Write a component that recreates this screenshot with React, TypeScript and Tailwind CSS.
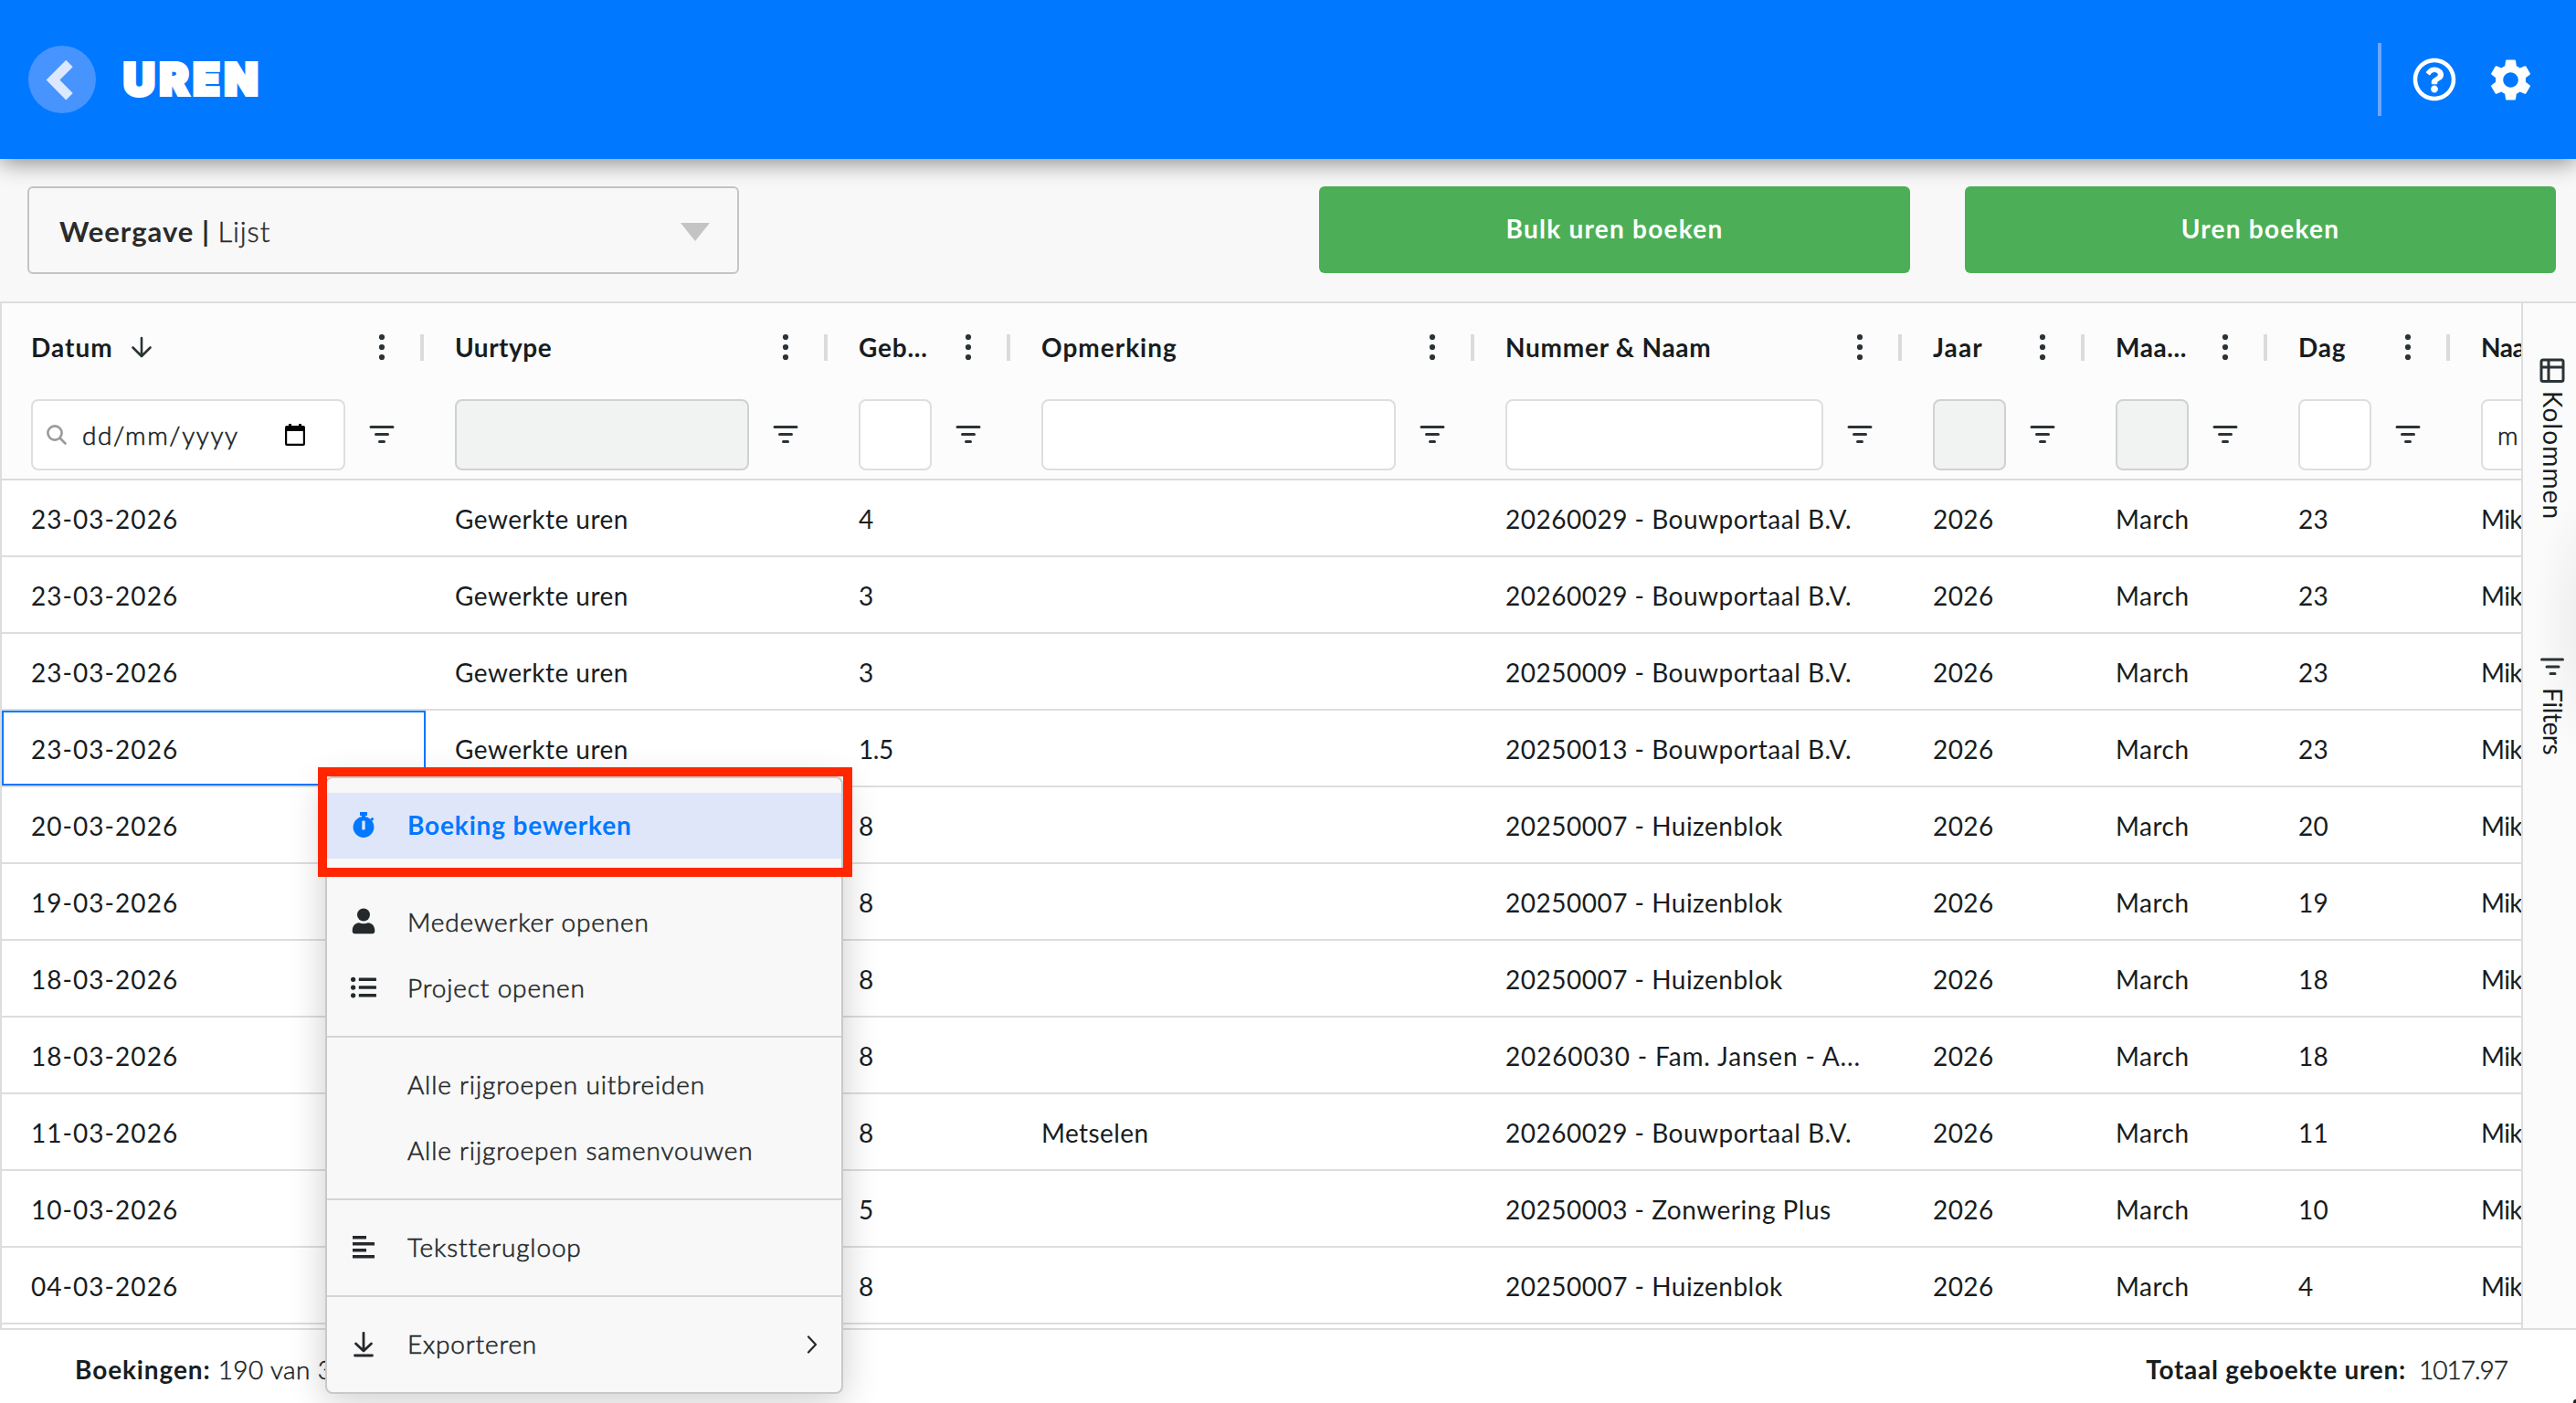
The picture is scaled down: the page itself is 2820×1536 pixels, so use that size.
import { FaRegQuestionCircle, FaListUl } from "react-icons/fa";
import { MdSettings } from "react-icons/md";
import type { ReactNode } from "react";

type Column = { title: string; width: string; tracking: string; disabled?: boolean; date?: boolean; value?: string };

const columns: Column[] = [
  { title: "Datum", width: "w-[464px]", tracking: "tracking-[1.05px]", date: true },
  { title: "Uurtype", width: "w-[442px]", tracking: "tracking-[0.5px]", disabled: true },
  { title: "Geb...", width: "w-[200px]", tracking: "tracking-[0.8px]" },
  { title: "Opmerking", width: "w-[508px]", tracking: "tracking-[1px]" },
  { title: "Nummer & Naam", width: "w-[468px]", tracking: "tracking-[0.75px]" },
  { title: "Jaar", width: "w-[200px]", tracking: "tracking-[1.1px]", disabled: true },
  { title: "Maa...", width: "w-[200px]", tracking: "tracking-[0.6px]", disabled: true },
  { title: "Dag", width: "w-[200px]", tracking: "tracking-[0.8px]" },
  { title: "Naam", width: "w-[300px]", tracking: "tracking-[-0.4px]", value: "m" },
];

const type = "Gewerkte uren";
const rows: string[][] = [
  ["23-03-2026", type, "4", "", "20260029 - Bouwportaal B.V.", "2026", "March", "23", "Mik"],
  ["23-03-2026", type, "3", "", "20260029 - Bouwportaal B.V.", "2026", "March", "23", "Mik"],
  ["23-03-2026", type, "3", "", "20250009 - Bouwportaal B.V.", "2026", "March", "23", "Mik"],
  ["23-03-2026", type, "1.5", "", "20250013 - Bouwportaal B.V.", "2026", "March", "23", "Mik"],
  ["20-03-2026", "", "8", "", "20250007 - Huizenblok", "2026", "March", "20", "Mik"],
  ["19-03-2026", "", "8", "", "20250007 - Huizenblok", "2026", "March", "19", "Mik"],
  ["18-03-2026", "", "8", "", "20250007 - Huizenblok", "2026", "March", "18", "Mik"],
  ["18-03-2026", "", "8", "", "20260030 - Fam. Jansen - A...", "2026", "March", "18", "Mik"],
  ["11-03-2026", "", "8", "Metselen", "20260029 - Bouwportaal B.V.", "2026", "March", "11", "Mik"],
  ["10-03-2026", "", "5", "", "20250003 - Zonwering Plus", "2026", "March", "10", "Mik"],
  ["04-03-2026", "", "8", "", "20250007 - Huizenblok", "2026", "March", "4", "Mik"],
];

function Dots() {
  return (
    <svg className="h-8 w-8" viewBox="0 0 32 32" fill="#2b3336">
      <circle cx="16" cy="5" r="3.1" />
      <circle cx="16" cy="16" r="3.1" />
      <circle cx="16" cy="27" r="3.1" />
    </svg>
  );
}

function FilterIcon() {
  return (
    <svg className="h-8 w-8" viewBox="0 0 32 32" stroke="#2b3336" strokeWidth="3" strokeLinecap="round">
      <path d="M4 7.5h24M9.5 15.5h13M13.5 23.5h5" />
    </svg>
  );
}

function HeaderCell({ col }: { col: Column }) {
  return (
    <div className={`flex h-24 shrink-0 items-center justify-between pl-8 ${col.width}`}>
      <div className="flex items-center gap-[19px]">
        <span className={`text-[28px] font-bold ${col.tracking}`}>{col.title}</span>
        {col.date && (
          <svg className="h-6 w-6" viewBox="0 0 24 24" fill="none" stroke="#2b3336" strokeWidth="2.6" strokeLinecap="round" strokeLinejoin="round">
            <path d="M12 2v20M2.5 12.500 12 22l9.500-9.500" />
          </svg>
        )}
      </div>
      <div className="flex items-center pr-0.5">
        <Dots />
        <span className="ml-[26px] h-[29px] w-1 bg-[#dadbdb]" />
      </div>
    </div>
  );
}

function FilterCell({ col }: { col: Column }) {
  return (
    <div className={`flex h-24 shrink-0 items-center pr-8 pl-8 ${col.width}`}>
      <div
        className={`flex h-[78px] flex-1 items-center rounded-lg border-2 ${
          col.disabled ? "border-[#d0d2d2] bg-[#f1f3f2]" : "border-[#dddede] bg-white"
        }`}
      >
        {col.date && (
          <>
            <svg className="ml-[14px] h-6 w-6" viewBox="0 0 24 24" fill="none" stroke="#999b9b" strokeWidth="2.6" strokeLinecap="round">
              <circle cx="10" cy="10" r="7.600" />
              <path d="m15.500 15.500 6 6" />
            </svg>
            <span className="ml-4 text-[28px] font-light tracking-[1.600px] [-webkit-text-stroke:0.6px_#181d1f]">dd/mm/yyyy</span>
            <svg className="ml-auto mr-[41px] h-[26px] w-6" viewBox="0 0 24 26" fill="black">
              <path d="M5 1h3v2h8V1h3v2h2a2 2 0 0 1 2 2v18a2 2 0 0 1-2 2H3a2 2 0 0 1-2-2V5a2 2 0 0 1 2-2h2zM3.200 9v13.800h17.600V9z" />
            </svg>
          </>
        )}
        {col.value && <span className="ml-4 text-[28px] font-light [-webkit-text-stroke:0.6px_#181d1f]">{col.value}</span>}
      </div>
      <span className="ml-6">
        <FilterIcon />
      </span>
    </div>
  );
}

const cellTracking = [
  "tracking-[1.05px]",
  "tracking-[0.5px]",
  "tracking-[-0.4px]",
  "tracking-[0.4px]",
  "tracking-[0.5px]",
  "tracking-[0.4px]",
  "tracking-[0.5px]",
  "tracking-[0.2px]",
  "tracking-[-0.6px]",
];

function MenuItem({ icon, children, active, arrow }: { icon?: ReactNode; children: string; active?: boolean; arrow?: boolean }) {
  return (
    <div
      className={`flex h-[72px] items-center text-[28px] ${
        active
          ? "bg-[#dfe6fa] font-bold tracking-[0.85px] text-[#0078ff]"
          : "font-light tracking-[0.85px] text-[#24292b] [-webkit-text-stroke:0.6px_#24292b]"
      }`}
    >
      <span className="flex w-[88px] items-center pl-5">
        <span className="flex w-10 justify-center">{icon}</span>
      </span>
      <span className="pb-[3px]">{children}</span>
      {arrow && (
        <svg className="ml-auto mr-[26px] h-5 w-3" viewBox="0 0 12 20" fill="none" stroke="#24292b" strokeWidth="2.200" strokeLinecap="round" strokeLinejoin="round">
          <path d="m2 1.500 8 8.500-8 8.500" />
        </svg>
      )}
    </div>
  );
}

function Separator() {
  return <div className="my-4 h-0.5 bg-[#d4d5d5]" />;
}

export default function App() {
  return (
    <div className="relative flex h-[1536px] w-[2820px] flex-col overflow-hidden bg-[#f8f8f8] font-['Lato','Liberation_Sans',sans-serif] text-[#181d1f]">
      <header className="relative z-10 flex h-[174px] shrink-0 items-center bg-[#0078ff] pl-[31px] shadow-[0_4px_24px_rgba(0,0,0,0.45)]">
        <div className="flex h-[74px] w-[74px] items-center justify-center rounded-full bg-[#4794ff]">
          <svg className="h-[74px] w-[74px]" viewBox="0 0 74 74" fill="none" stroke="#dbe8ff" strokeWidth="10.500">
            <path d="M45 19.500 27 37.500l18 18.200" />
          </svg>
        </div>
        <h1 className="ml-[30px] font-['Inter',sans-serif] text-[48px] font-black tracking-[4.800px] text-white [-webkit-text-stroke:4px_white]">UREN</h1>
        <div className="ml-auto mr-[44px] flex items-center">
          <span className="h-20 w-1 bg-[#6ba6ff]" />
          <FaRegQuestionCircle className="ml-[34px] h-12 w-12 text-white" />
          <MdSettings className="ml-[32px] h-[55px] w-[55px] text-white" />
        </div>
      </header>

      <div className="flex h-[156px] shrink-0 items-start pt-[30px] pr-[22px] pl-[30px]">
        <div className="flex h-24 w-[779px] items-center rounded-md border-2 border-[#c4c4c4] pr-[30px] pl-[33px] text-[31px] text-[#2b2b2b]">
          <span className="pt-0.5 font-light [-webkit-text-stroke:0.5px_#2b2b2b]">
            <span className="font-bold tracking-[1px] [-webkit-text-stroke:0]">Weergave |</span> <span className="tracking-[0.9px]">Lijst</span>
          </span>
          <svg className="mt-1 ml-auto h-5 w-8" viewBox="0 0 32 20" fill="#c4c4c4">
            <path d="M0 0h32L16 20z" />
          </svg>
        </div>
        <div className="ml-auto flex gap-[60px] text-[28px] font-bold text-white">
          <div className="flex h-[95px] w-[647px] items-center justify-center rounded-md bg-[#4caf57] pb-[3px] tracking-[1.250px]">Bulk uren boeken</div>
          <div className="flex h-[95px] w-[647px] items-center justify-center rounded-md bg-[#4caf57] pb-[3px] tracking-[1.250px]">Uren boeken</div>
        </div>
      </div>

      <main className="flex h-[1124px] shrink-0 border-t-2 border-l-2 border-[#dcdddd] bg-white">
        <div className="w-[2758px] shrink-0 overflow-hidden">
          <div className="w-[2758px] overflow-hidden border-b-2 border-[#d9dbdb] bg-[#fcfcfc]">
            <div className="flex">{columns.map((c) => <HeaderCell key={c.title} col={c} />)}</div>
            <div className="flex">{columns.map((c) => <FilterCell key={c.title} col={c} />)}</div>
          </div>
          {rows.map((row, r) => (
            <div key={r} className="flex h-[84px] border-b-2 border-[#dcdddd] text-[28px]">
              {row.map((cell, c) => (
                <div
                  key={c}
                  className={`flex shrink-0 items-center border-2 pt-px pl-[30px] whitespace-nowrap ${columns[c].width} ${
                    cell.includes("Jansen") ? "tracking-[0.85px]" : cellTracking[c]
                  } ${r === 3 && c === 0 ? "border-[#0078ff]" : "border-transparent"}`}
                >
                  {cell}
                </div>
              ))}
            </div>
          ))}
        </div>
        <aside className="flex w-[60px] shrink-0 flex-col items-center border-l-2 border-[#dcdddd] bg-[#fbfbfb] bg-[radial-gradient(ellipse_60px_150px_at_72px_350px,#ececec,#fbfbfb)] pt-[60px] text-[28px]">
          <svg className="ml-[6px] h-[28px] w-[28px]" viewBox="0 0 28 28" fill="none" stroke="#2b3336" strokeWidth="3">
            <rect x="2" y="2" width="24" height="23.500" rx="2" />
            <path d="M2 10h24M10 2v23" />
          </svg>
          <span className="mt-2 ml-[8px] h-[286px] tracking-[1.1px] [writing-mode:vertical-rl]">Kolommen</span>
          <svg className="mt-1 ml-[6px] h-6 w-7" viewBox="0 0 28 24" stroke="#2b3336" strokeWidth="3" strokeLinecap="round">
            <path d="M2.500 4h23M8 12h13M12 19.500h5" />
          </svg>
          <span className="mt-[11px] ml-[8px] tracking-[-0.4px] [writing-mode:vertical-rl]">Filters</span>
        </aside>
      </main>

      <footer className="flex h-[82px] items-center justify-between border-t-2 border-[#dcdddd] bg-white pt-1.5 pr-[75px] pl-[82px] text-[28px]">
        <span className="font-light tracking-[0.4px] [-webkit-text-stroke:0.5px_#181d1f]">
          <span className="font-bold tracking-[0.9px] [-webkit-text-stroke:0]">Boekingen:</span> 190 van 3
        </span>
        <span className="flex gap-[14px]">
          <span className="font-bold tracking-[0.75px]">Totaal geboekte uren:</span>
          <span className="font-light tracking-[-1px] [-webkit-text-stroke:0.5px_#181d1f]">1017.97</span>
        </span>
      </footer>

      <div className="absolute top-[850px] left-[356px] z-20 h-[676px] w-[567px] rounded-lg border-2 border-[#c8c9c9] bg-[#f8f8f8] py-4 shadow-[0_8px_40px_rgba(0,0,0,0.2)]">
        <MenuItem
          active
          icon={
            <svg className="h-8 w-7" viewBox="0 0 28 32">
              <path d="M10 1h8v4h-8zM12 4h4v4h-4zM21 9l2.500-2.300 2 2L23 11z" fill="#0078ff" />
              <circle cx="14" cy="17.500" r="11.400" fill="#0078ff" />
              <rect x="12.300" y="10.500" width="3.400" height="10" rx="1" fill="#dfe6fa" />
            </svg>
          }
        >
          Boeking bewerken
        </MenuItem>
        <Separator />
        <MenuItem
          icon={
            <svg className="mb-1 h-8 w-7" viewBox="0 0 28 32" fill="#24292b">
              <circle cx="14" cy="9.500" r="7" />
              <path d="M9 18.300c3.200 1.300 6.800 1.300 10 0 4.600.2 7.300 4 7.300 8.700 0 2.300-1 3.200-2.800 3.200h-19c-1.800 0-2.800-.9-2.800-3.200 0-4.700 2.700-8.500 7.300-8.700z" />
            </svg>
          }
        >
          Medewerker openen
        </MenuItem>
        <MenuItem icon={<FaListUl className="mb-[3px] h-7 w-7" />}>Project openen</MenuItem>
        <Separator />
        <MenuItem>Alle rijgroepen uitbreiden</MenuItem>
        <MenuItem>Alle rijgroepen samenvouwen</MenuItem>
        <Separator />
        <MenuItem
          icon={
            <svg className="mb-[3px] h-7 w-7" viewBox="0 0 28 28" fill="#24292b">
              <path d="M2 2h15v3.600H2zM2 9h24v3.600H2zM2 16h15v3.600H2zM2 23h24v3.600H2z" />
            </svg>
          }
        >
          Tekstterugloop
        </MenuItem>
        <Separator />
        <MenuItem
          arrow
          icon={
            <svg className="h-7 w-7" viewBox="0 0 28 28" fill="none" stroke="#24292b" strokeWidth="2.800" strokeLinecap="round" strokeLinejoin="round">
              <path d="M14 1.500v19M5.500 13l8.500 8 8.500-8M4.500 26h19" />
            </svg>
          }
        >
          Exporteren
        </MenuItem>
      </div>
      <div className="absolute top-[840px] left-[348px] z-30 h-[120px] w-[585px] border-[10px] border-[#ff2600]" />
      <div className="absolute right-0 bottom-0 h-1 w-[3px] rounded-tl-full bg-[#222]" />
    </div>
  );
}
